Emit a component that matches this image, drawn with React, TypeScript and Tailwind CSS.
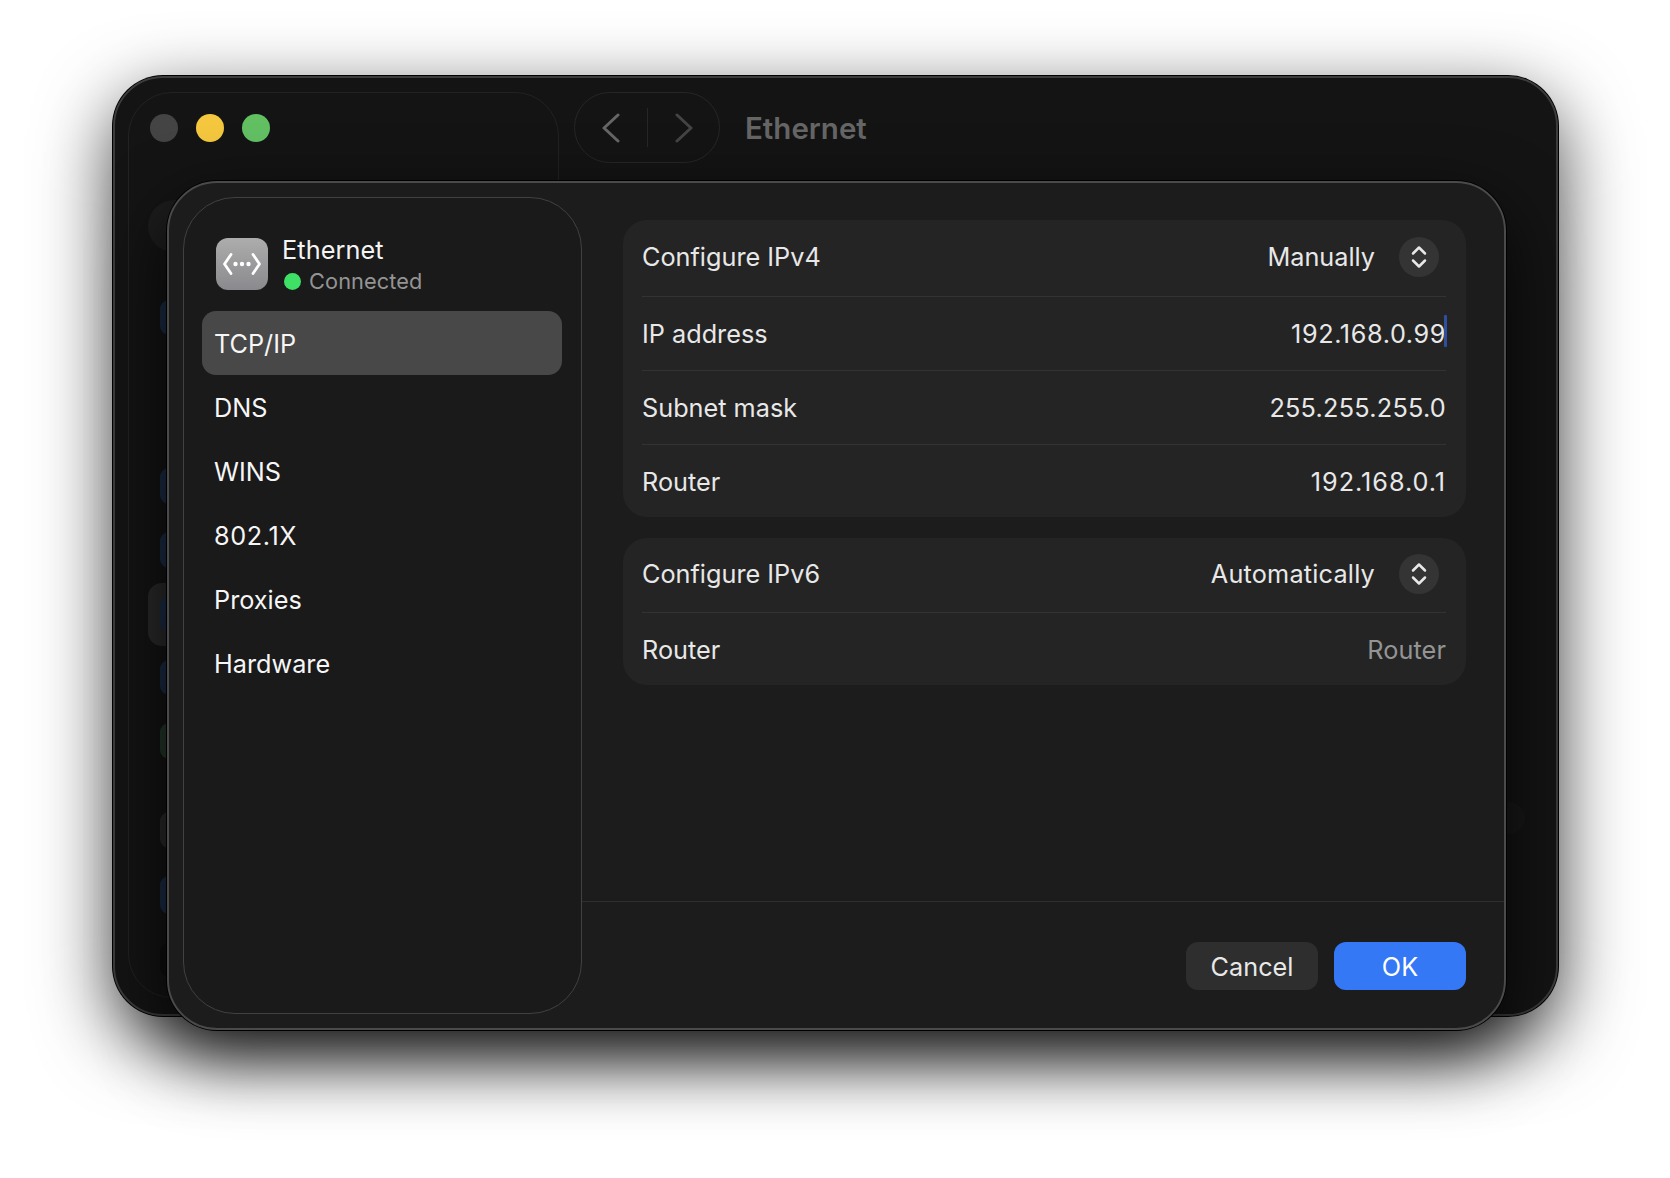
const font = { fontFamily: "Inter, 'Noto Sans', sans-serif" };

const behindTiles = [
  { top: 300, h: 35, color: "bg-[#1b2c45]" },
  { top: 468, h: 36, color: "bg-[#1b2c45]" },
  { top: 532, h: 36, color: "bg-[#1b2c45]" },
  { top: 596, h: 36, color: "bg-[#1b2c45]" },
  { top: 660, h: 35, color: "bg-[#1b2c45]" },
  { top: 723, h: 36, color: "bg-[#24382a]" },
  { top: 812, h: 36, color: "bg-[#2a2a2a]" },
  { top: 876, h: 38, color: "bg-[#1b2c45]" },
  { top: 943, h: 34, color: "bg-[#0f0f0f]" },
];

const tabs = ["TCP/IP", "DNS", "WINS", "802.1X", "Proxies", "Hardware"];

function Chevrons() {
  return (
    <div className="flex h-10 w-10 items-center justify-center rounded-full bg-[#343434]">
      <svg width="16" height="24" viewBox="0 0 16 24" fill="none" stroke="#e8e8e8" strokeWidth="2.5" strokeLinecap="round" strokeLinejoin="round">
        <path d="M2 8.5 8 2.5l6 6" />
        <path d="M2 15.5l6 6 6-6" />
      </svg>
    </div>
  );
}

function Row({ label, height, children, last }: { label: string; height: string; children: React.ReactNode; last?: boolean }) {
  return (
    <div className={`flex items-center justify-between ${height} ${last ? "" : "border-b border-[#333333]"}`}>
      <span className="pt-[2px] text-[25.25px] font-[430] text-[#e8e8e8]">{label}</span>
      {children}
    </div>
  );
}

export default function App() {
  return (
    <div className="relative h-[1178px] w-[1670px] overflow-hidden bg-white" style={font}>
      {/* window behind the sheet */}
      <div className="absolute left-[113px] top-[76px] h-[940px] w-[1445px] rounded-[50px] border-2 border-[#3c3c3c] bg-[#141414] shadow-[0_24px_75px_rgba(0,0,0,0.75),0_0_0_1px_#000]">
        <div className="absolute left-[13px] top-[14px] h-[906px] w-[431px] rounded-[44px] border border-[#222222]" />
        <div className="absolute left-[35px] top-[36px] flex gap-[18px]">
          <div className="h-7 w-7 rounded-full bg-[#444444]" />
          <div className="h-7 w-7 rounded-full bg-[#f4c73f]" />
          <div className="h-7 w-7 rounded-full bg-[#62c063]" />
        </div>
        <div className="absolute left-[459px] top-[14px] flex h-[71px] w-[146px] items-center justify-center gap-[27px] rounded-full border border-[#262626]">
          <svg width="18" height="30" viewBox="0 0 18 30" fill="none" stroke="#666666" strokeWidth="3" strokeLinecap="round" strokeLinejoin="round">
            <path d="M16 2 2 15l14 13" />
          </svg>
          <div className="h-[39px] w-px bg-[#272727]" />
          <svg width="18" height="30" viewBox="0 0 18 30" fill="none" stroke="#444444" strokeWidth="3" strokeLinecap="round" strokeLinejoin="round">
            <path d="M2 2l14 13L2 28" />
          </svg>
        </div>
        <div className="absolute left-[630px] top-[33px] text-[29.5px] font-semibold leading-[34px] text-[#666666]">Ethernet</div>
        <div className="absolute left-[33px] top-[122px] h-[52px] w-[60px] rounded-[26px] bg-[#1d1d1d]" />
        <div className="absolute left-[33px] top-[505px] h-[63px] w-[60px] rounded-[14px] bg-[#2a2a2a]" />
        {behindTiles.map((t) => (
          <div key={t.top} className={`absolute left-[45px] w-[20px] rounded-[9px] ${t.color}`} style={{ top: t.top - 78, height: t.h }} />
        ))}
        <div className="absolute left-[1378px] top-[724px] h-8 w-8 rounded-full bg-[#181818]" />
      </div>

      {/* sheet */}
      <div className="absolute left-[167px] top-[181px] flex h-[849px] w-[1339px] rounded-[50px] border-2 border-[#4a4a4a] bg-[#1c1c1c] shadow-[0_26px_70px_rgba(0,0,0,0.8),0_0_0_1px_#000]">
        <div className="my-[14px] ml-[14px] flex w-[399px] shrink-0 flex-col rounded-[52px] border-[1.5px] border-[#414141] bg-[#1a1a1a] pl-[18px] pr-[19px] pt-[35px]">
          <div className="flex items-center gap-[14px] pl-[14px]">
            <div className="flex h-[52px] w-[52px] items-center justify-center rounded-[12px] bg-gradient-to-b from-[#adadad] to-[#8a8a8e]">
              <svg width="40" height="24" viewBox="0 0 40 24" fill="none" stroke="#ffffff" strokeWidth="2.8" strokeLinecap="round" strokeLinejoin="round">
                <path d="M9 2.5 2.5 12 9 21.5" />
                <path d="M31 2.5 37.500 12 31 21.5" />
                <circle cx="13.500" cy="12" r="2.2" fill="#ffffff" stroke="none" />
                <circle cx="20" cy="12" r="2.2" fill="#ffffff" stroke="none" />
                <circle cx="26.500" cy="12" r="2.2" fill="#ffffff" stroke="none" />
              </svg>
            </div>
            <div className="flex flex-col pt-[2px]">
              <span className="text-[25.25px] font-[430] leading-[30px] tracking-[0.1px] text-[#f4f4f4]">Ethernet</span>
              <span className="mt-[2px] flex items-center gap-[8px] pl-[2px] text-[21.75px] font-[430] leading-[28px] tracking-[0.1px] text-[#949494]">
                <span className="h-[17px] w-[17px] rounded-full bg-[#3fe066]" />
                Connected
              </span>
            </div>
          </div>
          <div className="mt-[16px] flex flex-col">
            {tabs.map((tab, i) => (
              <div
                key={tab}
                className={`flex h-[64px] items-center rounded-[14px] px-3 pt-[3px] text-[25.25px] font-[430] text-[#f6f6f6] ${i === 0 ? "bg-[#484848]" : ""} ${tab === "802.1X" ? "tracking-[0.6px]" : ""}`}
              >
                {tab}
              </div>
            ))}
          </div>
        </div>

        <div className="flex flex-1 flex-col">
          <div className="flex-1 pl-[41px] pr-[38px] pt-[37px]">
            <div className="rounded-[24px] bg-[#242424] pl-[19px] pr-[20px]">
              <Row label="Configure IPv4" height="h-[77px] pb-[2px]">
                <div className="mr-[7px] flex items-center gap-[24px]">
                  <span className="pt-[2px] text-[25.25px] font-[430] text-[#e8e8e8]">Manually</span>
                  <Chevrons />
                </div>
              </Row>
              <Row label="IP address" height="h-[74px]">
                <span className="relative pt-[2px] text-[25.25px] font-[430] tracking-[0.6px] text-[#e8e8e8]">
                  192.168.0.99
                  <span className="absolute right-[-1px] top-[1px] h-[32px] w-[3px] rounded-[1px] bg-[#2d4f9e]" />
                </span>
              </Row>
              <Row label="Subnet mask" height="h-[74px]">
                <span className="pt-[2px] text-[25.25px] font-[430] tracking-[0.25px] text-[#e8e8e8]">255.255.255.0</span>
              </Row>
              <Row label="Router" height="h-[72px] pt-[2px]" last>
                <span className="pt-[2px] text-[25.25px] font-[430] tracking-[0.95px] text-[#e8e8e8]">192.168.0.1</span>
              </Row>
            </div>
            <div className="mt-[21px] rounded-[24px] bg-[#242424] pl-[19px] pr-[20px]">
              <Row label="Configure IPv6" height="h-[75px] pb-[2px]">
                <div className="mr-[7px] flex items-center gap-[24px]">
                  <span className="pt-[2px] text-[25.25px] font-[430] tracking-[0.2px] text-[#e8e8e8]">Automatically</span>
                  <Chevrons />
                </div>
              </Row>
              <Row label="Router" height="h-[72px] pt-[2px]" last>
                <span className="pt-[2px] text-[25.25px] font-[430] tracking-[0.1px] text-[#949494]">Router</span>
              </Row>
            </div>
          </div>
          <div className="flex h-[127px] justify-end gap-4 border-t border-[#2e2e2e] pr-[38px] pt-[40px]">
            <div className="flex h-12 w-[132px] items-center justify-center rounded-[12px] bg-[#2e2e2e] pt-[3px] text-[25.25px] font-[430] text-[#e8e8e8]">Cancel</div>
            <div className="flex h-12 w-[132px] items-center justify-center rounded-[12px] bg-[#3478f6] pt-[3px] text-[25.25px] font-[430] text-white">OK</div>
          </div>
        </div>
      </div>
    </div>
  );
}
